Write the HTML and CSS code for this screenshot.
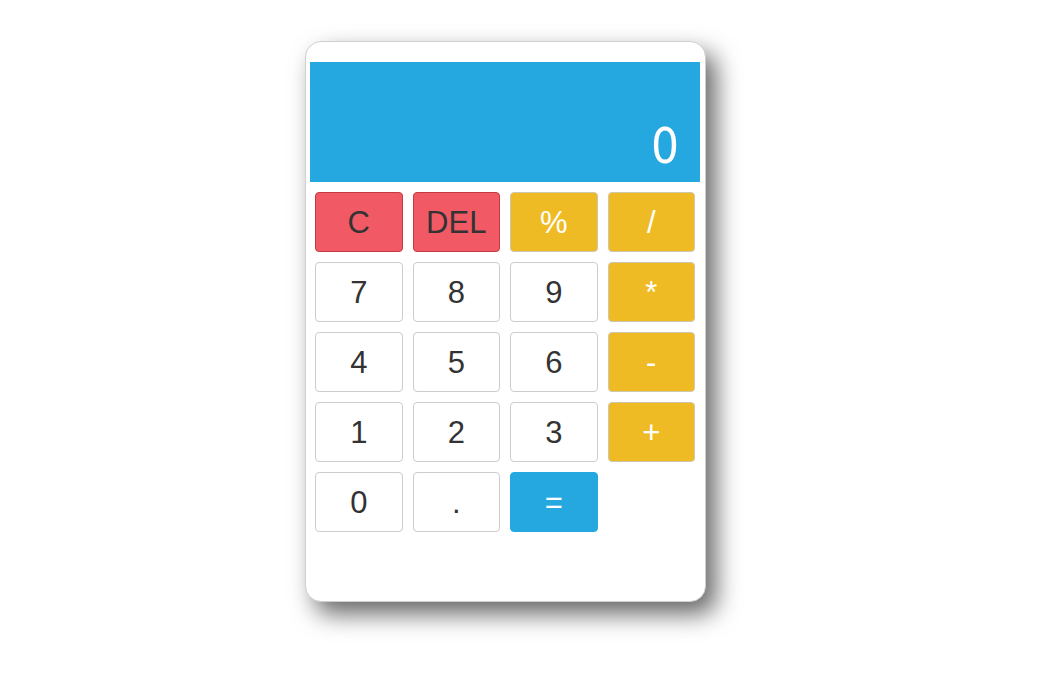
FILE: index.html
```html
<!DOCTYPE html>
<html>
<head>
<meta charset="utf-8">
<link rel="stylesheet" href="styles.css">
</head>
<body>
<div class="page">
  <div class="calc">
    <div class="display"><span class="digits">0</span></div>
    <div class="keys">
      <button class="key red">C</button>
      <button class="key red">DEL</button>
      <button class="key yellow">%</button>
      <button class="key yellow">/</button>
      <button class="key">7</button>
      <button class="key">8</button>
      <button class="key">9</button>
      <button class="key yellow">*</button>
      <button class="key">4</button>
      <button class="key">5</button>
      <button class="key">6</button>
      <button class="key yellow">-</button>
      <button class="key">1</button>
      <button class="key">2</button>
      <button class="key">3</button>
      <button class="key yellow">+</button>
      <button class="key">0</button>
      <button class="key">.</button>
      <button class="key blue">=</button>
    </div>
  </div>
</div>
</body>
</html>
```

FILE: styles.css
```css
html, body {
  margin: 0;
  padding: 0;
  background: #ffffff;
  font-family: "Liberation Sans", Arial, sans-serif;
}
.page {
  box-sizing: border-box;
  min-height: 677px;
  padding: 41px 0 0 305px;
}
.calc {
  box-sizing: border-box;
  width: 401px;
  height: 561px;
  background: #ffffff;
  border: 1px solid #d0d0d0;
  border-radius: 16px;
  padding: 20px 5px 0 4px;
  box-shadow: 10px 12px 24px rgba(0, 0, 0, 0.6);
}
.display {
  height: 120px;
  background: #25a7df;
  display: flex;
  align-items: flex-end;
  justify-content: flex-end;
  padding: 0 21px 16px 0;
  box-sizing: border-box;
}
.digits {
  color: #ffffff;
  font-family: "DejaVu Sans Condensed", "DejaVu Sans", sans-serif;
  font-size: 49px;
  line-height: 38px;
  font-weight: normal;
}
.keys {
  display: grid;
  grid-template-columns: repeat(4, 1fr);
  grid-auto-rows: 60px;
  gap: 10px;
  padding: 10px 5px;
}
.key {
  box-sizing: border-box;
  margin: 0;
  border: 1px solid #cccccc;
  border-radius: 4px;
  background: #ffffff;
  color: #333333;
  font-family: "Liberation Sans", Arial, sans-serif;
  font-size: 31px;
  line-height: 1;
  padding: 0;
}
.key.red {
  background: #f15a65;
  border-color: #c23a42;
  color: #333333;
}
.key.yellow {
  background: #eebb24;
  border-color: #cfc6b0;
  color: #ffffff;
}
.key.blue {
  background: #25a7df;
  border-color: #25a7df;
  color: #ffffff;
}
```
